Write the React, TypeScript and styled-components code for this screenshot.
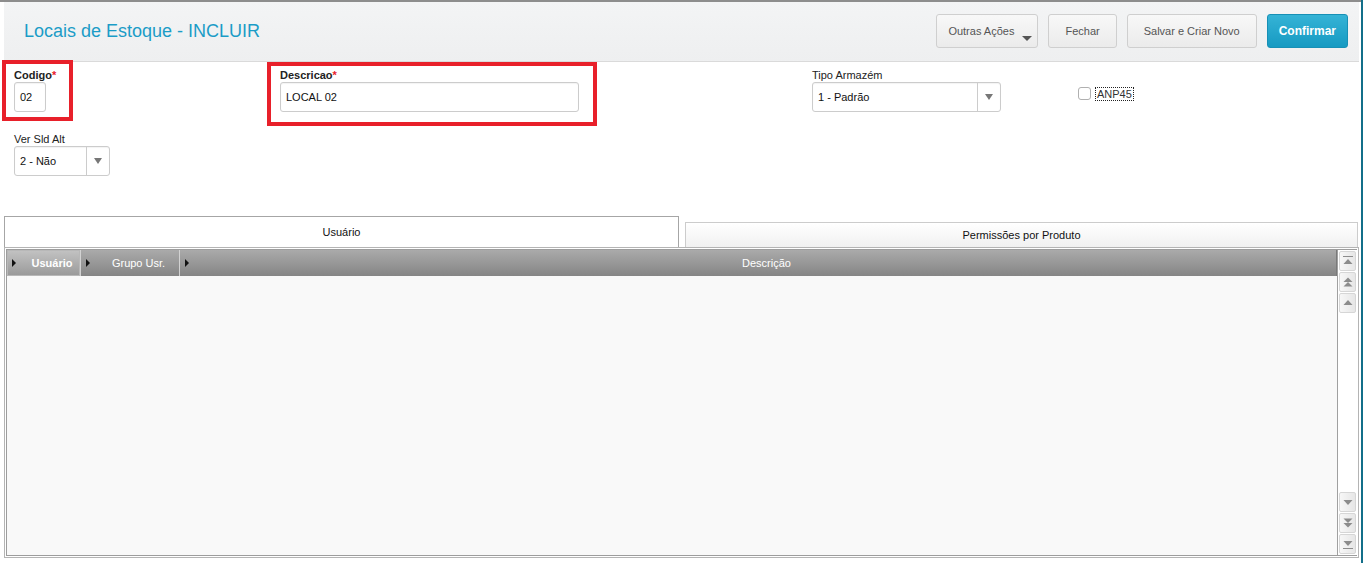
import styled, { createGlobalStyle } from 'styled-components';

const GlobalStyle = createGlobalStyle`
  body {
    margin: 0;
    background: #ffffff;
    font-family: "Liberation Sans", Arial, sans-serif;
  }
`;

type Box = { l: number; t: number; w: number; h: number };

const App = () => {
  return (
    <Page>
      <GlobalStyle />
      <Main>
        <TopRule />
        <Header>
          <Title>Locais de Estoque - INCLUIR</Title>
          <Actions>
            <Button $caret>Outras Ações</Button>
            <Button>Fechar</Button>
            <Button>Salvar e Criar Novo</Button>
            <PrimaryButton>Confirmar</PrimaryButton>
          </Actions>
        </Header>
        <Form>
          <FieldRow>
            <Field $box={{ l: -12, t: -8, w: 71, h: 61 }}>
              <Label $required>
                Codigo<Star>*</Star>
              </Label>
              <Input $w={32}>02</Input>
            </Field>
            <Field $box={{ l: -13, t: -6, w: 330, h: 64 }}>
              <Label $required>
                Descricao<Star>*</Star>
              </Label>
              <Input $w={299}>LOCAL 02</Input>
            </Field>
            <Field>
              <Label>Tipo Armazém</Label>
              <Select $w={189}>
                <SelectValue>1 - Padrão</SelectValue>
                <SelectArrow />
              </Select>
            </Field>
            <CheckField>
              <CheckBox />
              <CheckLabel>ANP45</CheckLabel>
            </CheckField>
          </FieldRow>
          <FieldRow>
            <Field>
              <Label>Ver Sld Alt</Label>
              <Select $w={96}>
                <SelectValue>2 - Não</SelectValue>
                <SelectArrow />
              </Select>
            </Field>
          </FieldRow>
        </Form>
        <TabBar>
          <Tab $active>Usuário</Tab>
          <Tab>Permissões por Produto</Tab>
        </TabBar>
        <GridFrame>
          <GridInner>
            <GridMain>
              <HeadRow>
                <HeadCell $w={74} $selected>
                  <Tri />
                  <HeadText $bold>Usuário</HeadText>
                </HeadCell>
                <HeadCell $w={99}>
                  <Tri />
                  <HeadText>Grupo Usr.</HeadText>
                </HeadCell>
                <HeadCell $grow>
                  <Tri />
                  <HeadText>Descrição</HeadText>
                </HeadCell>
              </HeadRow>
              <GridBody />
            </GridMain>
            <ScrollBar>
              <ScrollGroup>
                <ScrollBtn>
                  <ArrowIcon dir="up" bar />
                </ScrollBtn>
                <ScrollBtn>
                  <ArrowIcon dir="up" double />
                </ScrollBtn>
                <ScrollBtn>
                  <ArrowIcon dir="up" />
                </ScrollBtn>
              </ScrollGroup>
              <ScrollGroup>
                <ScrollBtn>
                  <ArrowIcon dir="down" />
                </ScrollBtn>
                <ScrollBtn>
                  <ArrowIcon dir="down" double />
                </ScrollBtn>
                <ScrollBtn>
                  <ArrowIcon dir="down" bar />
                </ScrollBtn>
              </ScrollGroup>
            </ScrollBar>
          </GridInner>
        </GridFrame>
      </Main>
      <SideRule />
    </Page>
  );
};

const ArrowIcon = ({ dir, double, bar }: { dir: 'up' | 'down'; double?: boolean; bar?: boolean }) => {
  const up = dir === 'up';
  return (
    <svg width="10" height="10" viewBox="0 0 10 10">
      {bar && <rect x="0" y={up ? 0 : 9} width="10" height="1" fill="#8c8c8c" />}
      {double ? (
        up ? (
          <>
            <polygon points="5,0.5 9.5,5 0.5,5" fill="#8c8c8c" />
            <polygon points="5,5 9.5,9.5 0.5,9.5" fill="#8c8c8c" />
          </>
        ) : (
          <>
            <polygon points="0.5,0.5 9.5,0.5 5,5" fill="#8c8c8c" />
            <polygon points="0.5,5 9.5,5 5,9.5" fill="#8c8c8c" />
          </>
        )
      ) : up ? (
        <polygon points={bar ? '5,3 9.5,8 0.5,8' : '5,2 9.5,7 0.5,7'} fill="#8c8c8c" />
      ) : (
        <polygon points={bar ? '0.5,2 9.5,2 5,7' : '0.5,3 9.5,3 5,8'} fill="#8c8c8c" />
      )}
    </svg>
  );
};

export default App;

const Page = styled.div`
  display: flex;
  width: 1370px;
  height: 563px;
  background: #ffffff;
`;

const Main = styled.div`
  width: 1361px;
  display: flex;
  flex-direction: column;
`;

const SideRule = styled.div`
  width: 2px;
  background: #136f8a;
`;

const TopRule = styled.div`
  height: 2px;
  background: #8d8d8d;
`;

const Header = styled.div`
  height: 59px;
  margin: 0 2px 0 4px;
  padding: 0 11px 0 20px;
  display: flex;
  align-items: center;
  justify-content: space-between;
  background: linear-gradient(#f3f4f5, #eeeff0);
  border-bottom: 1px solid #dadada;
`;

const Title = styled.h1`
  margin: 0 0 1px 0;
  font-size: 18px;
  font-weight: normal;
  color: #1b9cc7;
`;

const Actions = styled.div`
  display: flex;
  gap: 10px;
  align-items: center;
  margin-bottom: 2px;
`;

const Button = styled.div<{ $caret?: boolean }>`
  position: relative;
  height: 32px;
  display: flex;
  align-items: center;
  padding: 0 ${(p) => (p.$caret ? '23px 0 11px' : '16px')};
  background: linear-gradient(#f8f8f8, #ebebeb);
  border: 1px solid #cfcfcf;
  border-radius: 3px;
  font-size: 11px;
  color: #555555;
  &::after {
    content: '';
    display: ${(p) => (p.$caret ? 'block' : 'none')};
    position: absolute;
    right: 5px;
    bottom: 6px;
    border-left: 5px solid transparent;
    border-right: 5px solid transparent;
    border-top: 5px solid #555555;
  }
`;

const PrimaryButton = styled.div`
  height: 32px;
  display: flex;
  align-items: center;
  padding: 0 11px;
  background: linear-gradient(#35b3d6, #169ac2);
  border: 1px solid #1790b6;
  border-radius: 3px;
  font-size: 12px;
  font-weight: bold;
  color: #ffffff;
`;

const Form = styled.div`
  padding: 6px 0 0 14px;
  display: flex;
  flex-direction: column;
  gap: 20px;
`;

const FieldRow = styled.div`
  display: grid;
  grid-template-columns: 266px 532px 266px 1fr;
  align-items: start;
`;

const Field = styled.div<{ $box?: Box }>`
  position: relative;
  display: flex;
  flex-direction: column;
  align-items: flex-start;
  &::before {
    content: '';
    display: ${(p) => (p.$box ? 'block' : 'none')};
    position: absolute;
    left: ${(p) => p.$box?.l ?? 0}px;
    top: ${(p) => p.$box?.t ?? 0}px;
    width: ${(p) => p.$box?.w ?? 0}px;
    height: ${(p) => p.$box?.h ?? 0}px;
    box-sizing: border-box;
    border: 4px solid #e8202a;
    pointer-events: none;
  }
`;

const Label = styled.div<{ $required?: boolean }>`
  height: 14px;
  line-height: 14px;
  font-size: 11px;
  font-weight: ${(p) => (p.$required ? 'bold' : 'normal')};
  color: #222222;
`;

const Star = styled.span`
  color: #e8202a;
`;

const Input = styled.div<{ $w: number }>`
  box-sizing: border-box;
  width: ${(p) => p.$w}px;
  height: 30px;
  padding: 0 5px;
  display: flex;
  align-items: center;
  background: #ffffff;
  border: 1px solid #cccccc;
  border-radius: 3px;
  box-shadow: inset 0 1px 1px rgba(0, 0, 0, 0.05);
  font-size: 11px;
  color: #111111;
`;

const Select = styled(Input)`
  padding: 0;
`;

const SelectValue = styled.div`
  flex: 1;
  padding-left: 5px;
`;

const SelectArrow = styled.div`
  width: 22px;
  height: 100%;
  border-left: 1px solid #cccccc;
  display: flex;
  align-items: center;
  justify-content: center;
  &::after {
    content: '';
    border-left: 4px solid transparent;
    border-right: 4px solid transparent;
    border-top: 6px solid #777777;
  }
`;

const CheckField = styled.div`
  display: flex;
  align-items: center;
  gap: 5px;
  margin-top: 19px;
`;

const CheckBox = styled.div`
  width: 11px;
  height: 11px;
  border: 1px solid #b0b0b0;
  border-radius: 3px;
  background: #ffffff;
`;

const CheckLabel = styled.div`
  font-size: 11px;
  line-height: 12px;
  color: #333333;
  outline: 1px dotted #222222;
  padding: 0 1px;
`;

const TabBar = styled.div`
  margin: 40px 3px 0 4px;
  display: flex;
  align-items: flex-end;
  gap: 6px;
`;

const Tab = styled.div<{ $active?: boolean }>`
  box-sizing: border-box;
  flex: 0 0 ${(p) => (p.$active ? '675px' : '673px')};
  height: ${(p) => (p.$active ? '31px' : '25px')};
  display: flex;
  align-items: center;
  justify-content: center;
  background: ${(p) => (p.$active ? '#ffffff' : 'linear-gradient(#ffffff, #f1f1f1)')};
  border: 1px solid ${(p) => (p.$active ? '#a6a6a6' : '#cccccc')};
  border-bottom: none;
  font-size: 11px;
  color: #111111;
`;

const GridFrame = styled.div`
  margin: 0 2px 0 4px;
  height: 311px;
  box-sizing: border-box;
  border: 1px solid #b4b4b4;
  padding: 1px;
  display: flex;
`;

const GridInner = styled.div`
  flex: 1;
  display: flex;
  border: 1px solid #9d9d9d;
  border-right: none;
  background: #f9f9f9;
`;

const GridMain = styled.div`
  flex: 1;
  display: flex;
  flex-direction: column;
  border-right: 1px solid #a0a0a0;
`;

const HeadRow = styled.div`
  height: 26px;
  display: flex;
  background: linear-gradient(#aaaaaa, #858585);
  border-right: 1px solid #7a7a7a;
`;

const HeadCell = styled.div<{ $w?: number; $grow?: boolean; $selected?: boolean }>`
  box-sizing: border-box;
  ${(p) => (p.$grow ? 'flex: 1;' : `flex: 0 0 ${p.$w}px;`)}
  display: flex;
  align-items: center;
  padding-left: 5px;
  border-right: ${(p) => (p.$grow ? 'none' : '1px solid #d2d2d2')};
  background: ${(p) => (p.$selected ? 'linear-gradient(#c3c3c3, #999999)' : 'transparent')};
  ${(p) => p.$selected && 'box-shadow: inset 0 0 0 1px #b8b8b8;'}
`;

const Tri = styled.div`
  width: 0;
  height: 0;
  border-top: 4px solid transparent;
  border-bottom: 4px solid transparent;
  border-left: 4px solid #111111;
`;

const HeadText = styled.div<{ $bold?: boolean }>`
  flex: 1;
  padding-left: 8px;
  text-align: center;
  font-size: 11px;
  font-weight: ${(p) => (p.$bold ? 'bold' : 'normal')};
  color: #ffffff;
`;

const GridBody = styled.div`
  flex: 1;
`;

const ScrollBar = styled.div`
  box-sizing: border-box;
  width: 19px;
  padding: 1px;
  display: flex;
  flex-direction: column;
  justify-content: space-between;
  background: #ffffff;
`;

const ScrollGroup = styled.div`
  display: flex;
  flex-direction: column;
  gap: 1px;
`;

const ScrollBtn = styled.div`
  height: 18px;
  display: flex;
  align-items: center;
  justify-content: center;
  background: linear-gradient(90deg, #f7f7f7, #e6e6e6);
  border: 1px solid #d6d6d6;
  border-radius: 2px;
`;
